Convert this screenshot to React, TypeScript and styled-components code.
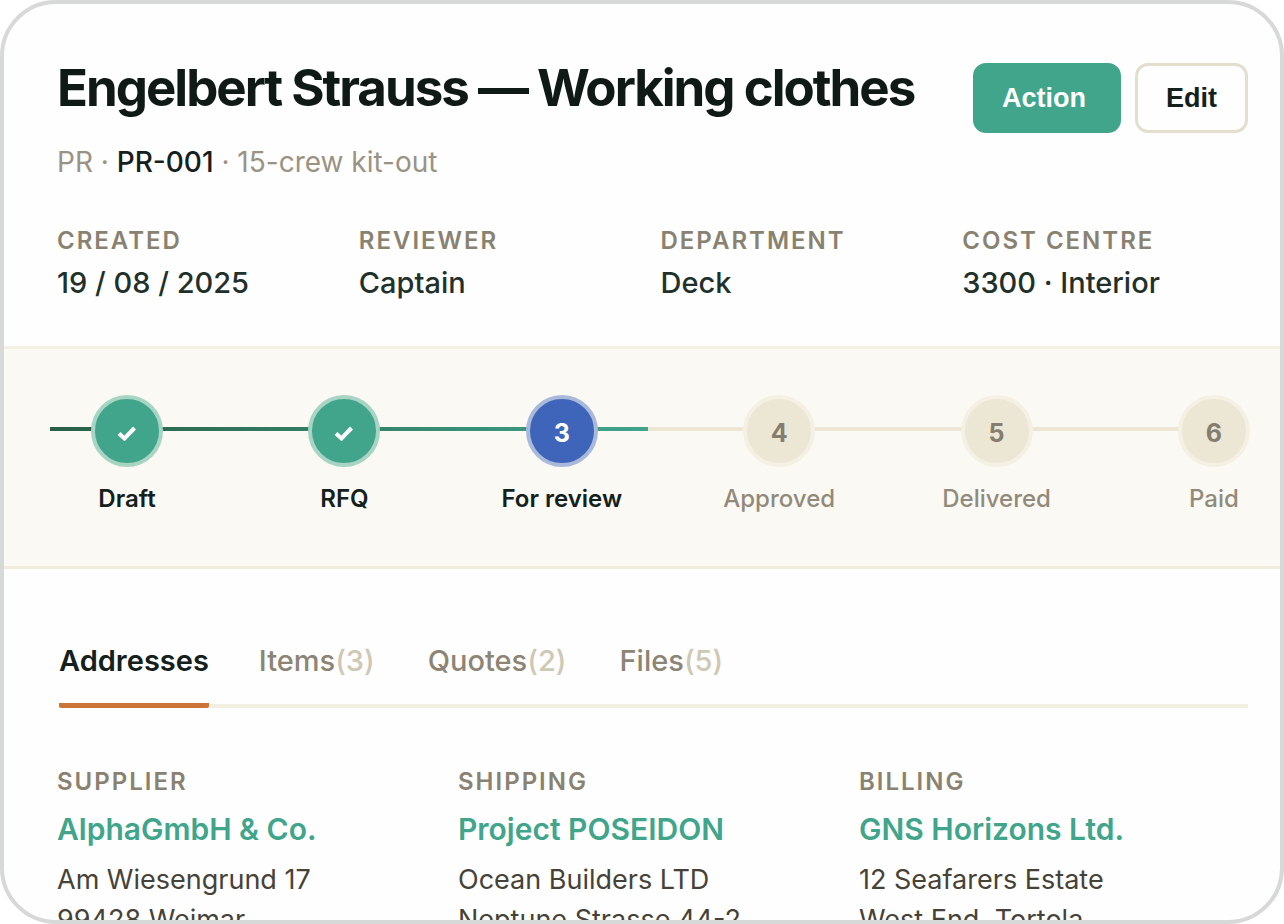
import React from 'react';
import styled, { createGlobalStyle } from 'styled-components';

const GlobalStyle = createGlobalStyle`
  *, *::before, *::after { box-sizing: border-box; }
  html, body, #root { height: 100%; }
  body {
    margin: 0;
    background: #ffffff;
    font-family: Inter, "Liberation Sans", sans-serif;
    color: #13201b;
  }
  h1, h2, p, dl, dd, ol, address { margin: 0; padding: 0; }
`;

const Card = styled.main`
  height: 100%;
  overflow: hidden;
  background: #fefefe;
  border: 4px solid #d6d9d7;
  border-radius: 56px;
`;

const Header = styled.header`
  display: flex;
  flex-direction: column;
  padding: 52px 32px 46px 53px;
`;

const TitleRow = styled.div`
  display: flex;
  justify-content: space-between;
  align-items: flex-start;
  gap: 24px;
  padding-top: 7px;
`;

const Title = styled.h1`
  font-size: 51px;
  line-height: 50px;
  font-weight: 700;
  letter-spacing: -2px;
  color: #0f1a16;
  white-space: nowrap;
`;

const Actions = styled.div`
  display: flex;
  flex: none;
  gap: 14px;
`;

const Button = styled.button<{ $primary?: boolean }>`
  height: 70px;
  padding: ${(p) => (p.$primary ? '0 32px 0 26px' : '0 28px')};
  border: 3px solid ${(p) => (p.$primary ? '#40a58b' : '#e3decd')};
  border-radius: 13px;
  background: ${(p) => (p.$primary ? '#40a58b' : '#fefefe')};
  color: ${(p) => (p.$primary ? '#ffffff' : '#13201b')};
  font: 700 27px/32px "Liberation Sans", Arial, sans-serif;
  cursor: pointer;
`;

const Subtitle = styled.p`
  margin-top: 12px;
  font-size: 28px;
  line-height: 34px;
  color: #9a9384;

  strong {
    font-weight: 500;
    color: #13201b;
  }
`;

const Facts = styled.dl`
  display: grid;
  grid-template-columns: repeat(4, 1fr);
  gap: 16px;
  margin-top: 47px;
`;

const FactLabel = styled.dt`
  font-size: 24px;
  line-height: 30px;
  font-weight: 600;
  letter-spacing: 2px;
  text-transform: uppercase;
  color: #8a8271;
`;

const FactValue = styled.dd`
  margin-top: 10px;
  font-size: 29px;
  line-height: 34px;
  font-weight: 500;
  color: #22302b;
`;

const Progress = styled.section`
  position: relative;
  padding: 46px 30px 52px 87px;
  border-top: 3px solid #f4f1e3;
  border-bottom: 3px solid #f1eddd;
  background: #fbf9f4;
`;

const Track = styled.div`
  position: absolute;
  top: 78px;
  left: 46px;
  right: 34px;
  height: 4px;
  background: #ede6d4;
`;

const TrackFill = styled.div`
  height: 100%;
  background: linear-gradient(90deg, #285f45, #40a58b);
`;

const Steps = styled.ol`
  position: relative;
  display: flex;
  justify-content: space-between;
  list-style: none;
`;

const Step = styled.li`
  display: flex;
  flex-direction: column;
  align-items: center;
  width: 72px;
`;

type StepState = 'done' | 'current' | 'next';

const dotColors: Record<StepState, { fill: string; ring: string; text: string }> = {
  done: { fill: '#40a58b', ring: '#a8d4c4', text: '#ffffff' },
  current: { fill: '#3e65b9', ring: '#a9b9da', text: '#ffffff' },
  next: { fill: '#ece6d5', ring: '#f4f0e4', text: '#857d6d' },
};

const Dot = styled.span<{ $state: StepState }>`
  display: flex;
  align-items: center;
  justify-content: center;
  width: 72px;
  height: 72px;
  padding-top: 4px;
  border: 4px solid ${(p) => dotColors[p.$state].ring};
  border-radius: 50%;
  background: ${(p) => dotColors[p.$state].fill};
  color: ${(p) => dotColors[p.$state].text};
  font-size: 25px;
  line-height: 30px;
  font-weight: 700;
`;

const StepLabel = styled.span<{ $state: StepState }>`
  margin-top: 17px;
  font-size: 24px;
  line-height: 30px;
  font-weight: ${(p) => (p.$state === 'next' ? 500 : 600)};
  color: ${(p) => (p.$state === 'next' ? '#928b7b' : '#13201b')};
  white-space: nowrap;
`;

const Body = styled.section`
  padding: 70px 32px 0 53px;
`;

const Tabs = styled.div`
  display: flex;
  gap: 50px;
  margin-left: 2px;
  border-bottom: 4px solid #f2efe1;
`;

const Tab = styled.button<{ $active?: boolean }>`
  margin-bottom: -4px;
  padding: 4px 0 24px;
  border: 0;
  border-bottom: 5px solid ${(p) => (p.$active ? '#cb7538' : 'transparent')};
  border-radius: 2px;
  background: none;
  font-family: inherit;
  font-size: 29px;
  line-height: 36px;
  font-weight: ${(p) => (p.$active ? 600 : 500)};
  color: ${(p) => (p.$active ? '#13201b' : '#8c8474')};
  cursor: pointer;
`;

const Count = styled.span`
  margin-right: 3px;
  color: #cfc8b4;
`;

const Addresses = styled.div`
  display: grid;
  grid-template-columns: repeat(3, 1fr);
  gap: 12px;
  margin-top: 59px;
`;

const AddressLabel = styled.h2`
  font-size: 24px;
  line-height: 30px;
  font-weight: 600;
  letter-spacing: 2px;
  text-transform: uppercase;
  color: #8a8271;
`;

const Company = styled.a`
  display: block;
  margin-top: 14px;
  font-size: 30px;
  line-height: 36px;
  font-weight: 600;
  color: #40a58b;
  text-decoration: none;
`;

const Lines = styled.address`
  margin-top: 13px;
  font-size: 27px;
  line-height: 40px;
  font-style: normal;
  color: #464238;
  white-space: nowrap;
`;

const Check = () => (
  <svg width="20" height="16" viewBox="0 0 20 16" fill="none" role="img" aria-label="Done">
    <path d="M2 8.5 7.5 13.5 17.5 3" stroke="#ffffff" strokeWidth="4" />
  </svg>
);

const facts = [
  ['Created', '19 / 08 / 2025'],
  ['Reviewer', 'Captain'],
  ['Department', 'Deck'],
  ['Cost centre', '3300 · Interior'],
];

const steps: { label: string; state: StepState }[] = [
  { label: 'Draft', state: 'done' },
  { label: 'RFQ', state: 'done' },
  { label: 'For review', state: 'current' },
  { label: 'Approved', state: 'next' },
  { label: 'Delivered', state: 'next' },
  { label: 'Paid', state: 'next' },
];

const tabs: { label: string; count?: number }[] = [
  { label: 'Addresses' },
  { label: 'Items', count: 3 },
  { label: 'Quotes', count: 2 },
  { label: 'Files', count: 5 },
];

const addresses = [
  { label: 'Supplier', company: 'AlphaGmbH & Co.', lines: ['Am Wiesengrund 17', '99428 Weimar'] },
  { label: 'Shipping', company: 'Project POSEIDON', lines: ['Ocean Builders LTD', 'Neptune Strasse 44-2'] },
  { label: 'Billing', company: 'GNS Horizons Ltd.', lines: ['12 Seafarers Estate', 'West End, Tortola'] },
];

export default function App() {
  const [active, setActive] = React.useState('Addresses');
  return (
    <>
      <GlobalStyle />
      <Card>
        <Header>
          <TitleRow>
            <Title>Engelbert Strauss — Working clothes</Title>
            <Actions>
              <Button $primary>Action</Button>
              <Button>Edit</Button>
            </Actions>
          </TitleRow>
          <Subtitle>
            PR · <strong>PR-001</strong> · 15-crew kit-out
          </Subtitle>
          <Facts>
            {facts.map(([label, value]) => (
              <div key={label}>
                <FactLabel>{label}</FactLabel>
                <FactValue>{value}</FactValue>
              </div>
            ))}
          </Facts>
        </Header>

        <Progress aria-label="Progress">
          <Track>
            <TrackFill style={{ width: `${(3 / steps.length) * 100}%` }} />
          </Track>
          <Steps>
            {steps.map((step, i) => (
              <Step key={step.label}>
                <Dot $state={step.state}>{step.state === 'done' ? <Check /> : i + 1}</Dot>
                <StepLabel $state={step.state}>{step.label}</StepLabel>
              </Step>
            ))}
          </Steps>
        </Progress>

        <Body>
          <Tabs role="tablist">
            {tabs.map((tab) => (
              <Tab
                key={tab.label}
                role="tab"
                aria-selected={active === tab.label}
                $active={active === tab.label}
                onClick={() => setActive(tab.label)}
              >
                {tab.label}
                {tab.count !== undefined && <Count>({tab.count})</Count>}
              </Tab>
            ))}
          </Tabs>
          <Addresses>
            {addresses.map((item) => (
              <div key={item.label}>
                <AddressLabel>{item.label}</AddressLabel>
                <Company href="#">{item.company}</Company>
                <Lines>
                  {item.lines.map((line) => (
                    <div key={line}>{line}</div>
                  ))}
                </Lines>
              </div>
            ))}
          </Addresses>
        </Body>
      </Card>
    </>
  );
}
